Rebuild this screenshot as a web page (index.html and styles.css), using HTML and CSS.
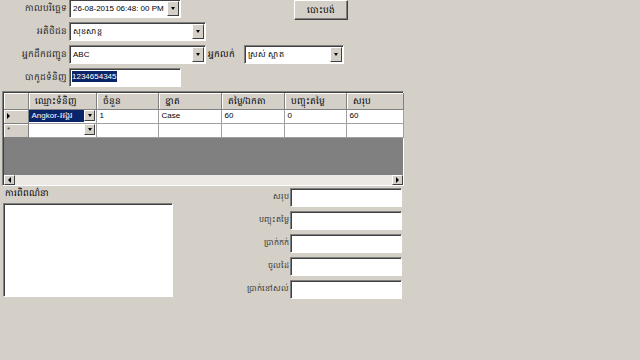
FILE: index.html
```html
<!DOCTYPE html>
<html lang="km">
<head>
  <meta charset="UTF-8" />
  <title>វិក្កយបត្រលក់</title>
  <link rel="stylesheet" href="styles.css">
</head>
<body>
  <!-- ក្បាលទម្រង់ -->
  <div class="form">
    <div class="row first">
      <label class="lbl">កាលបរិច្ឆេទ</label>
      <div class="combo date">
        <span class="val">26-08-2015 06:48: 00 PM</span>
        <span class="drop"></span>
      </div>
      <button class="btn">បោះបង់</button>
    </div>
    <div class="row">
      <label class="lbl">អតិថិជន</label>
      <div class="combo wide">
        <span class="val">សុខសាន្ត</span>
        <span class="drop"></span>
      </div>
    </div>
    <div class="row">
      <label class="lbl">អ្នកដឹកជញ្ជូន</label>
      <div class="combo wide">
        <span class="val">ABC</span>
        <span class="drop"></span>
      </div>
      <label class="lbl-seller">អ្នកលក់</label>
      <div class="combo seller">
        <span class="val">ស្រស់ ស្អាត</span>
        <span class="drop"></span>
      </div>
    </div>
    <div class="row">
      <label class="lbl">បាកូដទំនិញ</label>
      <div class="textbox barcode"><span class="sel">1234654345</span></div>
    </div>
  </div>

  <!-- តារាងទំនិញ -->
  <div class="grid">
    <table>
      <tr class="head">
        <th class="rh"></th>
        <th class="c1">ឈ្មោះទំនិញ</th>
        <th class="c2">ចំនួន</th>
        <th class="c3">ខ្នាត</th>
        <th class="c4">តម្លៃ/ឯកតា</th>
        <th class="c5">បញ្ចុះតម្លៃ</th>
        <th class="c6">សរុប</th>
      </tr>
      <tr>
        <td class="rh"><span class="arrow"></span></td>
        <td class="cell-combo active"><span>Angkor-អង្គរ</span><span class="drop"></span></td>
        <td>1</td>
        <td>Case</td>
        <td>60</td>
        <td>0</td>
        <td>60</td>
      </tr>
      <tr>
        <td class="rh star">*</td>
        <td class="cell-combo"><span></span><span class="drop"></span></td>
        <td></td>
        <td></td>
        <td></td>
        <td></td>
        <td></td>
      </tr>
    </table>
    <div class="empty"></div>
    <div class="hscroll">
      <span class="sbtn"><span class="tri left"></span></span>
      <span class="track"></span>
      <span class="sbtn"><span class="tri right"></span></span>
    </div>
  </div>

  <!-- ផ្នែកខាងក្រោម -->
  <div class="bottom">
    <div class="desc">
      <div class="desc-lbl">ការពិពណ៌នា</div>
      <div class="textbox memo"></div>
    </div>
    <div class="totals">
      <label>សរុប</label><div class="textbox"></div>
      <label>បញ្ចុះតម្លៃ</label><div class="textbox"></div>
      <label>ប្រាក់កក់</label><div class="textbox"></div>
      <label>ចូលដៃ</label><div class="textbox"></div>
      <label>ប្រាក់នៅសល់</label><div class="textbox"></div>
    </div>
  </div>
</body>
</html>
```

FILE: styles.css
```css
body {
  margin: 0;
  width: 640px;
  height: 360px;
  overflow: hidden;
  background: #d4d0c8;
  font-family: "Liberation Sans", "Noto Sans", sans-serif;
  font-size: 8px;
  color: #000;
}
/* ប្រអប់បញ្ចូល */
.textbox,
.combo {
  box-sizing: border-box;
  background: #fff;
  border-top: 1px solid #808080;
  border-left: 1px solid #808080;
  border-right: 1px solid #fff;
  border-bottom: 1px solid #fff;
  box-shadow: inset 1px 1px 0 #404040, 1px 1px 0 #d4d0c8;
  height: 19px;
}
.combo {
  display: flex;
  align-items: center;
  padding-left: 3px;
}
.combo .val {
  flex: 1;
  white-space: nowrap;
}
.drop {
  width: 12px;
  height: 15px;
  margin-right: 1px;
  box-sizing: border-box;
  background: #d4d0c8;
  border-top: 1px solid #fff;
  border-left: 1px solid #fff;
  border-right: 1px solid #404040;
  border-bottom: 1px solid #404040;
  position: relative;
}
.drop::after {
  content: "";
  position: absolute;
  left: 3px;
  top: 5px;
  border-left: 2px solid transparent;
  border-right: 2px solid transparent;
  border-top: 3px solid #000;
}
.row {
  display: flex;
  align-items: center;
  margin-top: 4px;
  height: 19px;
}
.row.first {
  margin-top: -1px;
  align-items: flex-start;
}
.lbl {
  width: 67px;
  flex-shrink: 0;
  text-align: right;
  padding-right: 2px;
  font-size: 9px;
  color: #222;
  white-space: nowrap;
  direction: rtl;
}
.row.first .lbl {
  line-height: 19px;
}
.date {
  width: 112px;
}
.wide {
  width: 137px;
}
.seller {
  width: 100px;
}
.lbl-seller {
  width: 36px;
  padding-left: 2px;
  font-size: 9px;
  white-space: nowrap;
  overflow: hidden;
}
.btn {
  margin-left: 113px;
  margin-top: 1px;
  width: 54px;
  height: 20px;
  background: #d4d0c8;
  border-top: 1px solid #fff;
  border-left: 1px solid #fff;
  border-right: 1px solid #404040;
  border-bottom: 1px solid #404040;
  box-shadow: inset -1px -1px 0 #808080;
  font-family: inherit;
  font-size: 9px;
  padding: 0;
}
.barcode {
  width: 112px;
  padding: 3px 2px;
}
.sel {
  background: #0a246a;
  color: #fff;
  padding: 1px 0;
}
/* តារាង */
.grid {
  margin: 4px 0 0 2px;
  width: 402px;
  box-sizing: border-box;
  border-top: 1px solid #808080;
  border-left: 1px solid #808080;
  border-right: 1px solid #fff;
  border-bottom: 1px solid #fff;
  box-shadow: inset 1px 1px 0 #404040;
  padding: 1px 0 0 1px;
  background: #808080;
}
table {
  border-collapse: collapse;
  width: 400px;
  table-layout: fixed;
  background: #fff;
}
th,
td {
  box-sizing: border-box;
  height: 14px;
  padding: 0 0 0 3px;
  border-right: 1px solid #a0a0a0;
  border-bottom: 1px solid #a0a0a0;
  text-align: left;
  font-weight: normal;
  white-space: nowrap;
  overflow: hidden;
  line-height: 12px;
}
.head th {
  height: 16px;
  background: #d4d0c8;
  font-size: 9px;
  padding-left: 6px;
  border-right: 1px solid #808080;
  border-bottom: 1px solid #808080;
  box-shadow: inset 1px 1px 0 #fff;
}
.rh {
  width: 24px;
  background: #d4d0c8;
  box-shadow: inset 1px 1px 0 #fff;
  border-right: 1px solid #808080;
  border-bottom: 1px solid #808080;
}
.c1 { width: 68px; }
.c2 { width: 62px; }
.c3 { width: 63px; }
.c4 { width: 63px; }
.c5 { width: 62px; }
.arrow {
  display: inline-block;
  border-top: 3px solid transparent;
  border-bottom: 3px solid transparent;
  border-left: 3px solid #000;
  vertical-align: middle;
}
.star {
  font-size: 8px;
  color: #333;
}
.cell-combo {
  padding: 0 1px 0 0;
}
.cell-combo span:first-child {
  display: inline-block;
  width: 52px;
  padding-left: 3px;
  height: 12px;
  line-height: 12px;
  vertical-align: middle;
}
.cell-combo .drop {
  display: inline-block;
  height: 11px;
  width: 11px;
  vertical-align: middle;
}
.cell-combo .drop::after {
  top: 3px;
}
.active span:first-child {
  background: #0a246a;
  color: #fff;
}
.empty {
  height: 37px;
}
.hscroll {
  display: flex;
  height: 10px;
  background: #ece9e4;
}
.sbtn {
  width: 11px;
  height: 10px;
  box-sizing: border-box;
  background: #d4d0c8;
  border-top: 1px solid #fff;
  border-left: 1px solid #fff;
  border-right: 1px solid #404040;
  border-bottom: 1px solid #404040;
  position: relative;
}
.track {
  flex: 1;
}
.tri {
  position: absolute;
  top: 1px;
  left: 3px;
  border-top: 3px solid transparent;
  border-bottom: 3px solid transparent;
}
.tri.left {
  border-right: 3px solid #000;
}
.tri.right {
  border-left: 3px solid #000;
}
/* ផ្នែកក្រោម */
.bottom {
  display: flex;
  width: 402px;
  margin-top: -1px;
}
.desc {
  width: 171px;
  padding-left: 3px;
}
.desc-lbl {
  height: 18px;
  line-height: 16px;
  padding-left: 2px;
  font-size: 9px;
}
.memo {
  width: 170px;
  height: 94px;
}
.totals {
  flex: 1;
  display: grid;
  grid-template-columns: 1fr 112px;
  row-gap: 4px;
  align-items: center;
  padding-top: 3px;
}
.totals label {
  text-align: right;
  white-space: nowrap;
  font-size: 8px;
  color: #333;
  padding-right: 1px;
}
```
